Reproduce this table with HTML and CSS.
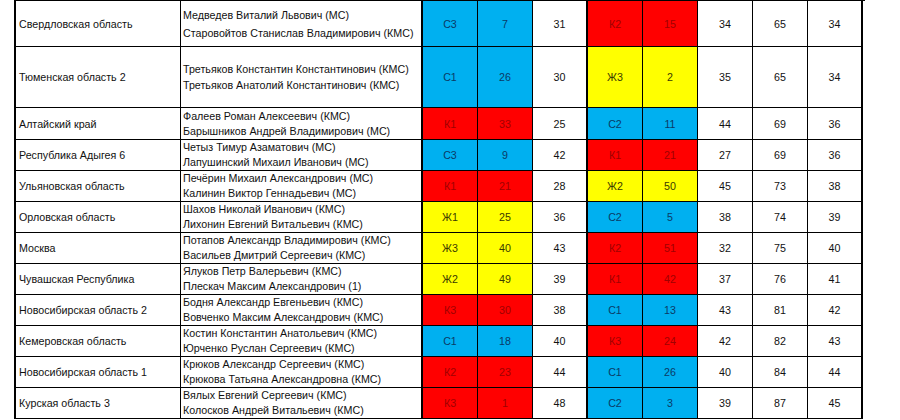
FILE: index.html
```html
<!DOCTYPE html>
<html lang="ru">
<head>
<meta charset="utf-8">
<title>Результаты</title>
<link rel="stylesheet" href="styles.css">
</head>
<body>
<div class="sheet">
  <div class="row r-first">
    <div class="cell region">Свердловская область</div>
    <div class="cell names"><span>Медведев Виталий Львович (МС)</span><span>Старовойтов Станислав Владимирович (КМС)</span></div>
    <div class="cell num blue">С3</div><div class="cell num blue">7</div><div class="cell num thin-end">31</div>
    <div class="cell num red">К2</div><div class="cell num red">15</div>
    <div class="cell num">34</div><div class="cell num">65</div><div class="cell num last">34</div>
  </div>
  <div class="row r-second">
    <div class="cell region">Тюменская область 2</div>
    <div class="cell names"><span>Третьяков Константин Константинович (КМС)</span><span>Третьяков Анатолий Константинович (КМС)</span></div>
    <div class="cell num blue">С1</div><div class="cell num blue">26</div><div class="cell num thin-end">30</div>
    <div class="cell num yellow">Ж3</div><div class="cell num yellow">2</div>
    <div class="cell num">35</div><div class="cell num">65</div><div class="cell num last">34</div>
  </div>
  <div class="row r-third">
    <div class="cell region">Алтайский край</div>
    <div class="cell names"><span>Фалеев Роман Алексеевич (КМС)</span><span>Барышников Андрей Владимирович (МС)</span></div>
    <div class="cell num red">К1</div><div class="cell num red">33</div><div class="cell num thin-end">25</div>
    <div class="cell num blue">С2</div><div class="cell num blue">11</div>
    <div class="cell num">44</div><div class="cell num">69</div><div class="cell num last">36</div>
  </div>
  <div class="row">
    <div class="cell region">Республика Адыгея 6</div>
    <div class="cell names"><span>Четыз Тимур Азаматович (МС)</span><span>Лапушинский Михаил Иванович (МС)</span></div>
    <div class="cell num blue">С3</div><div class="cell num blue">9</div><div class="cell num thin-end">42</div>
    <div class="cell num red">К1</div><div class="cell num red">21</div>
    <div class="cell num">27</div><div class="cell num">69</div><div class="cell num last">36</div>
  </div>
  <div class="row">
    <div class="cell region">Ульяновская область</div>
    <div class="cell names"><span>Печёрин Михаил Александрович (МС)</span><span>Калинин Виктор Геннадьевич (МС)</span></div>
    <div class="cell num red">К1</div><div class="cell num red">21</div><div class="cell num thin-end">28</div>
    <div class="cell num yellow">Ж2</div><div class="cell num yellow">50</div>
    <div class="cell num">45</div><div class="cell num">73</div><div class="cell num last">38</div>
  </div>
  <div class="row">
    <div class="cell region">Орловская область</div>
    <div class="cell names"><span>Шахов Николай Иванович (КМС)</span><span>Лихонин Евгений Витальевич (КМС)</span></div>
    <div class="cell num yellow">Ж1</div><div class="cell num yellow">25</div><div class="cell num thin-end">36</div>
    <div class="cell num blue">С2</div><div class="cell num blue">5</div>
    <div class="cell num">38</div><div class="cell num">74</div><div class="cell num last">39</div>
  </div>
  <div class="row">
    <div class="cell region">Москва</div>
    <div class="cell names"><span>Потапов Александр Владимирович (КМС)</span><span>Васильев Дмитрий Сергеевич (КМС)</span></div>
    <div class="cell num yellow">Ж3</div><div class="cell num yellow">40</div><div class="cell num thin-end">43</div>
    <div class="cell num red">К2</div><div class="cell num red">51</div>
    <div class="cell num">32</div><div class="cell num">75</div><div class="cell num last">40</div>
  </div>
  <div class="row">
    <div class="cell region">Чувашская Республика</div>
    <div class="cell names"><span>Ялуков Петр Валерьевич (КМС)</span><span>Плескач Максим Александрович (1)</span></div>
    <div class="cell num yellow">Ж2</div><div class="cell num yellow">49</div><div class="cell num thin-end">39</div>
    <div class="cell num red">К1</div><div class="cell num red">42</div>
    <div class="cell num">37</div><div class="cell num">76</div><div class="cell num last">41</div>
  </div>
  <div class="row">
    <div class="cell region">Новосибирская область 2</div>
    <div class="cell names"><span>Бодня Александр Евгеньевич (КМС)</span><span>Вовченко Максим Александрович (КМС)</span></div>
    <div class="cell num red">К3</div><div class="cell num red">30</div><div class="cell num thin-end">38</div>
    <div class="cell num blue">С1</div><div class="cell num blue">13</div>
    <div class="cell num">43</div><div class="cell num">81</div><div class="cell num last">42</div>
  </div>
  <div class="row">
    <div class="cell region">Кемеровская область</div>
    <div class="cell names"><span>Костин Константин Анатольевич (КМС)</span><span>Юрченко Руслан Сергеевич (КМС)</span></div>
    <div class="cell num blue">С1</div><div class="cell num blue">18</div><div class="cell num thin-end">40</div>
    <div class="cell num red">К3</div><div class="cell num red">24</div>
    <div class="cell num">42</div><div class="cell num">82</div><div class="cell num last">43</div>
  </div>
  <div class="row">
    <div class="cell region">Новосибирская область 1</div>
    <div class="cell names"><span>Крюков Александр Сергеевич (КМС)</span><span>Крюкова Татьяна Александровна (КМС)</span></div>
    <div class="cell num red">К2</div><div class="cell num red">23</div><div class="cell num thin-end">44</div>
    <div class="cell num blue">С1</div><div class="cell num blue">26</div>
    <div class="cell num">40</div><div class="cell num">84</div><div class="cell num last">44</div>
  </div>
  <div class="row">
    <div class="cell region">Курская область 3</div>
    <div class="cell names"><span>Вялых Евгений Сергеевич (КМС)</span><span>Колосков Андрей Витальевич (КМС)</span></div>
    <div class="cell num red">К3</div><div class="cell num red">1</div><div class="cell num thin-end">48</div>
    <div class="cell num blue">С2</div><div class="cell num blue">3</div>
    <div class="cell num">39</div><div class="cell num">87</div><div class="cell num last">45</div>
  </div>
</div>
</body>
</html>
```

FILE: styles.css
```css
html, body {
  margin: 0;
  padding: 0;
  background: #ffffff;
}

body {
  font-family: "Liberation Sans", Arial, sans-serif;
  font-size: 10.7px;
  color: #111111;
}

.sheet {
  margin-left: 14px;
  width: 849px;
  border-left: 2px solid #000;
  border-top: 1px solid #000;
}

.row {
  display: grid;
  grid-template-columns: 165px 242px repeat(8, 55px);
  height: 31px;
}

.r-first { height: 46px; }
.r-second { height: 61px; }
.r-third { height: 32px; }

.cell {
  box-sizing: border-box;
  border-right: 1px solid #000;
  border-bottom: 1px solid #000;
  display: flex;
  align-items: center;
  min-width: 0;
  white-space: nowrap;
  overflow: hidden;
}

.region {
  padding-left: 3px;
}

.names {
  flex-direction: column;
  align-items: flex-start;
  justify-content: center;
  padding-left: 2px;
  line-height: 15px;
  border-right-width: 2px;
}

.r-first .names { line-height: 18px; }
.r-second .names { line-height: 16px; }

.num {
  justify-content: center;
}

.thin-end {
  border-right-width: 2px;
}

.last {
  border-right-width: 2px;
}

.blue {
  background: #00b0f0;
  color: #0b3a66;
}

.red {
  background: #ff0000;
  color: #a00000;
}

.yellow {
  background: #ffff00;
  color: #3a3a00;
}
```
